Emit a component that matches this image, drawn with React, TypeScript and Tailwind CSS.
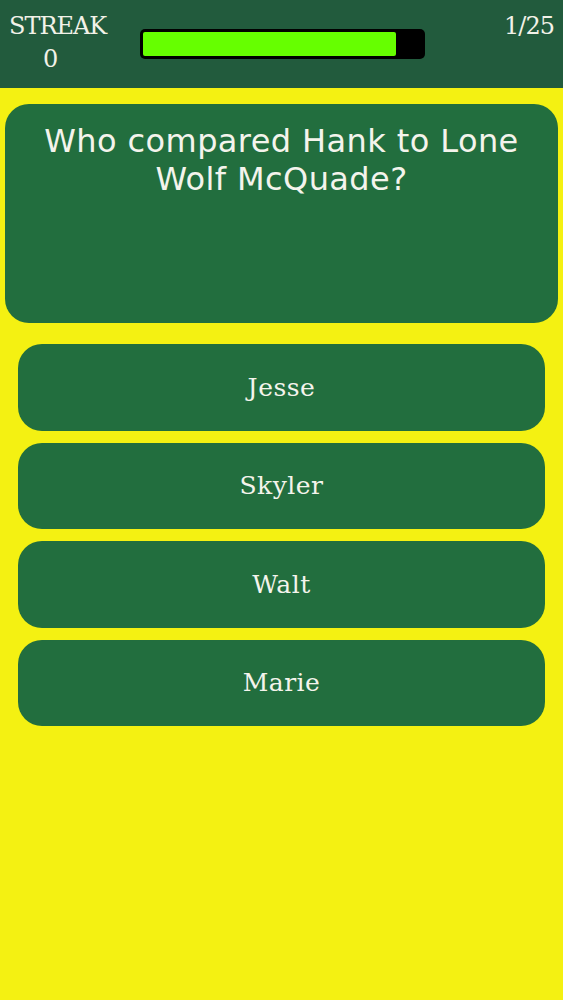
import React from "react";

const answers = ["Jesse", "Skyler", "Walt", "Marie"];

export default function App() {
  return (
    <div className="w-[563px] h-[1000px] bg-[#f4f112] flex flex-col overflow-hidden">
      <div className="h-[88px] bg-[#225b3d] flex items-start pl-[9px] pr-[9px] pt-[10px] text-[#f2f2e8] [font-family:'DejaVu_Serif',serif]">
        <div className="flex flex-col text-[24px] leading-[33px] tracking-[-1px]">
          <span>STREAK</span>
          <span className="pl-[34px]">0</span>
        </div>
        <div className="ml-[34px] mt-[19px] w-[285px] h-[30px] bg-black rounded-[5px] p-[3px] pr-[29px]">
          <div className="w-full h-full bg-[#66ff00] rounded-[2px]" />
        </div>
        <div className="ml-auto text-[24px] leading-[33px] tracking-[-1px]">1/25</div>
      </div>
      <div className="px-[5px] pt-[16px]">
        <div className="h-[219px] bg-[#226e3e] rounded-[24px] px-[30px] pt-[18px] text-center text-[#f4f4ec] text-[32px] leading-[38px] tracking-[0.4px] [font-family:'DejaVu_Sans',sans-serif]">
          Who compared Hank to Lone Wolf McQuade?
        </div>
      </div>
      <div className="px-[18px] pt-[21px] flex flex-col gap-[12px]">
        {answers.map((a) => (
          <div
            key={a}
            className="h-[86.5px] bg-[#226e3e] rounded-[24px] flex items-center justify-center text-[#f4f4ec] text-[25px] [font-family:'DejaVu_Serif',serif] tracking-[0.5px]"
          >
            {a}
          </div>
        ))}
      </div>
    </div>
  );
}
